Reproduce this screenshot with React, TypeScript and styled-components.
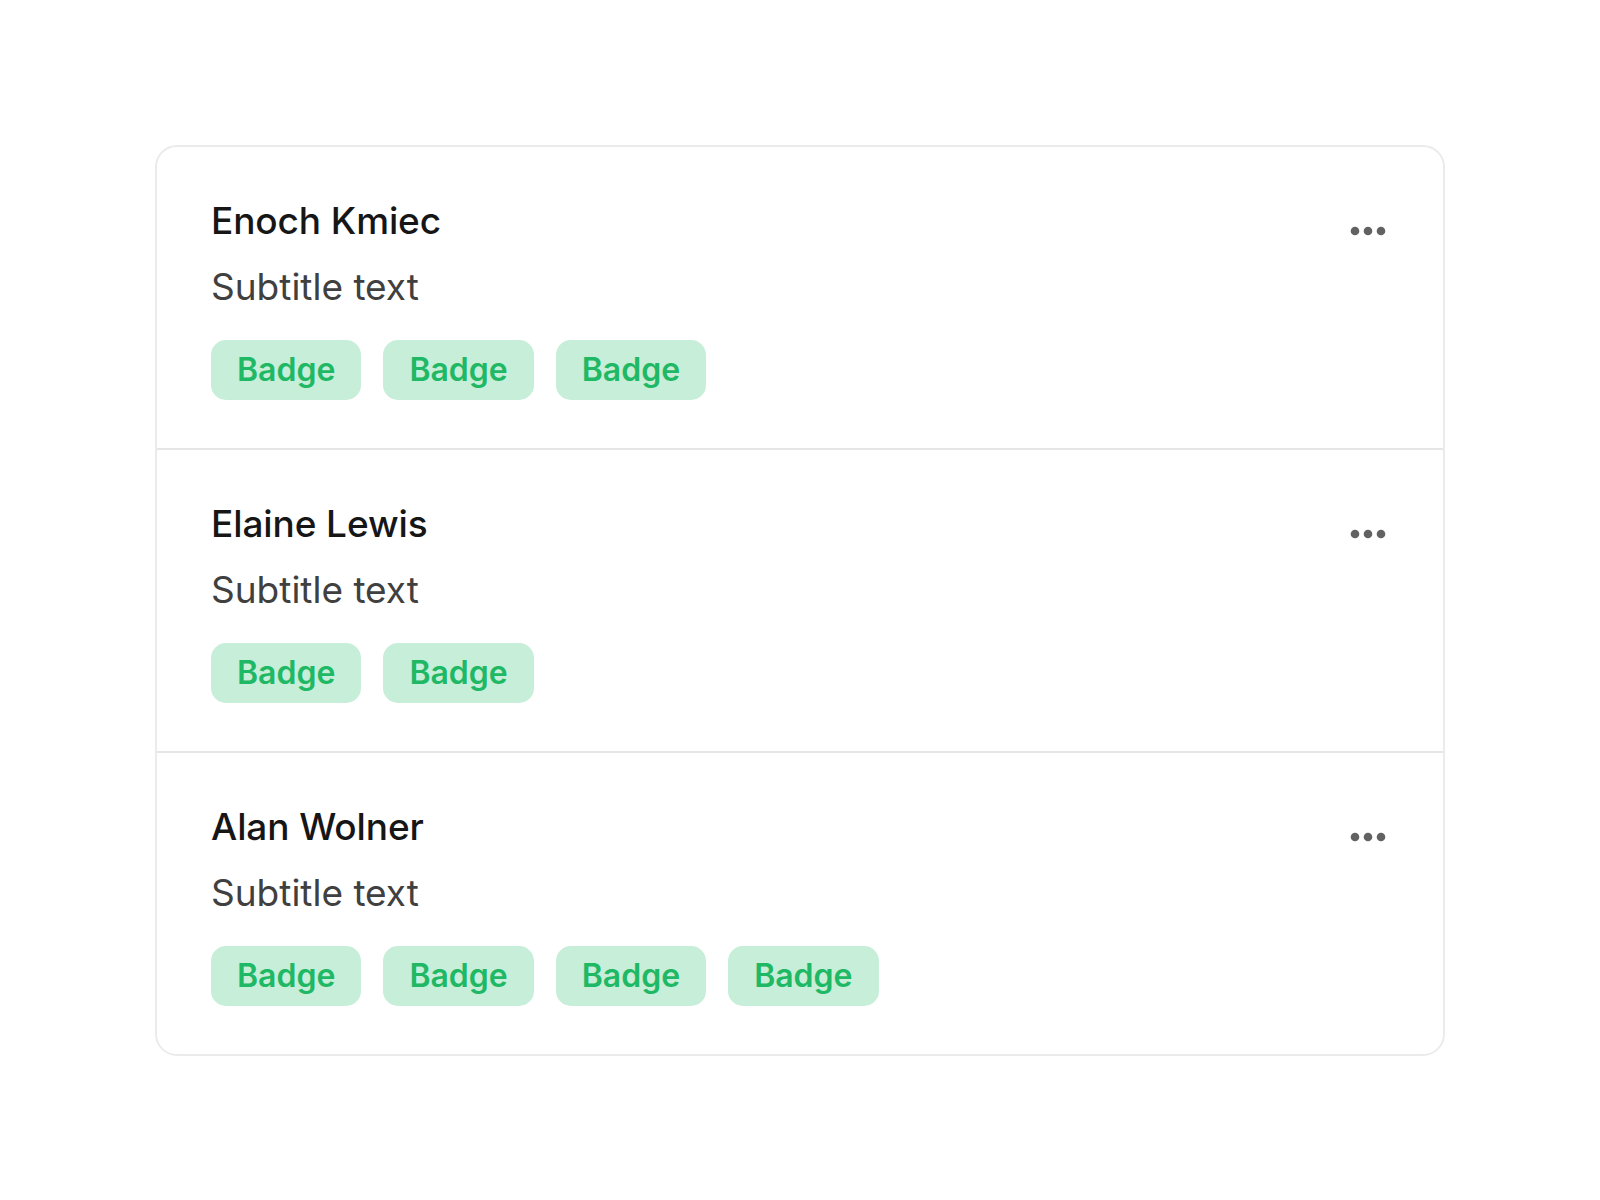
import React from "react";
import styled, { createGlobalStyle } from "styled-components";

const GlobalStyle = createGlobalStyle`
  html, body { margin: 0; padding: 0; background: #ffffff; }
  body { font-family: Inter, "Noto Sans", "Liberation Sans", sans-serif; }
  * { box-sizing: border-box; }
`;

const Page = styled.div`
  min-height: 100vh;
  display: flex;
  align-items: center;
  justify-content: center;
`;

const Card = styled.div`
  width: 1290px;
  border: 2px solid #ebebeb;
  border-radius: 22px;
  background: #ffffff;
  overflow: hidden;
`;

const Row = styled.div`
  display: flex;
  align-items: flex-start;
  justify-content: space-between;
  padding: 52px 57px 48px 54px;
  & + & {
    border-top: 2px solid #e6e6e6;
  }
`;

const Content = styled.div`
  display: flex;
  flex-direction: column;
`;

const Title = styled.div`
  font-size: 37px;
  line-height: 44px;
  font-weight: 500;
  color: #161616;
  letter-spacing: -0.1px;
`;

const Subtitle = styled.div`
  margin-top: 22px;
  font-size: 37px;
  line-height: 44px;
  font-weight: 400;
  color: #404040;
`;

const Badges = styled.div`
  display: flex;
  gap: 22px;
  margin-top: 31px;
`;

const Badge = styled.span`
  display: inline-flex;
  align-items: center;
  justify-content: center;
  height: 60px;
  padding: 0 26px;
  border-radius: 15px;
  background: #c6eed9;
  color: #1fb865;
  font-size: 32px;
  font-weight: 600;
`;

const MoreButton = styled.button`
  display: flex;
  align-items: center;
  justify-content: center;
  margin-top: 26px;
  padding: 0;
  border: none;
  background: transparent;
  cursor: pointer;
`;

const MoreIcon = () => (
  <svg width="36" height="12" viewBox="0 0 36 12" fill="#626262">
    <circle cx="5" cy="6" r="4.3" />
    <circle cx="18" cy="6" r="4.3" />
    <circle cx="31" cy="6" r="4.3" />
  </svg>
);

const people = [
  { name: "Enoch Kmiec", badges: 3 },
  { name: "Elaine Lewis", badges: 2 },
  { name: "Alan Wolner", badges: 4 },
];

export default function App() {
  return (
    <>
      <GlobalStyle />
      <Page>
        <Card>
          {people.map((p) => (
            <Row key={p.name}>
              <Content>
                <Title>{p.name}</Title>
                <Subtitle>Subtitle text</Subtitle>
                <Badges>
                  {Array.from({ length: p.badges }).map((_, i) => (
                    <Badge key={i}>Badge</Badge>
                  ))}
                </Badges>
              </Content>
              <MoreButton aria-label="More">
                <MoreIcon />
              </MoreButton>
            </Row>
          ))}
        </Card>
      </Page>
    </>
  );
}
